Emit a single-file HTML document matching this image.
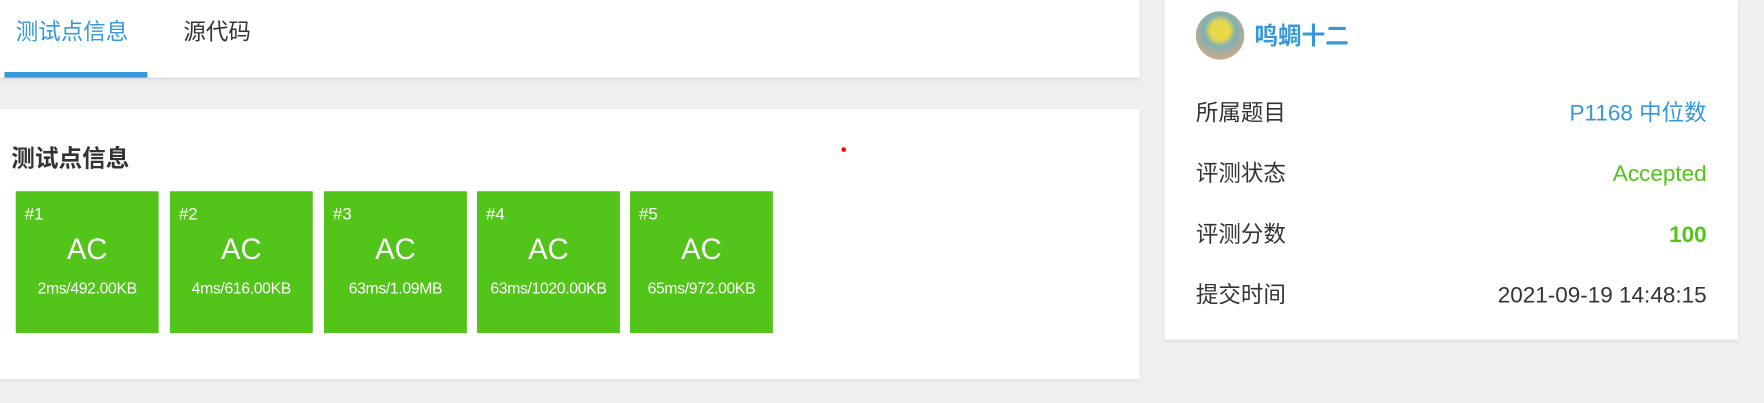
<!DOCTYPE html>
<html><head><meta charset="utf-8"><style>
body{margin:0;width:1764px;height:402px;background:#efefef;font-family:"Liberation Sans","Noto Sans CJK SC",sans-serif;position:relative;overflow:hidden}
#w{position:absolute;left:0;top:0;width:1568px;height:358px;transform:scale(1.125);transform-origin:0 0}
.card{position:absolute;background:#fff;box-shadow:0 1px 3px rgba(0,0,0,.12)}
.tab{position:absolute;top:16px;font-size:20px;line-height:26px}
.box{position:absolute;top:170px;width:127px;height:126px;background:#52c41a;color:#fff;text-align:center}
.box .n{position:absolute;left:8px;top:12px;font-size:15px}
.box .ac{position:absolute;left:0;right:0;top:36px;font-size:26px}
.box .m{position:absolute;left:-3px;right:-3px;top:78px;font-size:14px;white-space:nowrap;letter-spacing:-0.3px}
.row{position:absolute;left:1063px;width:454px;font-size:20px;color:#333;line-height:28px}
.row span{position:absolute;right:0;top:0;line-height:28px}
</style></head><body><div id="w">
<div class="card" style="left:0;top:0;width:1013px;height:69px">
<div class="tab" style="left:14px;color:#3498db">测试点信息</div>
<div class="tab" style="left:163px;color:#333">源代码</div>
<div style="position:absolute;left:4px;top:64px;width:127px;height:5px;background:#3498db"></div>
</div>
<div class="card" style="left:0;top:97px;width:1013px;height:240px">
<div style="position:absolute;left:10px;top:28px;font-size:21px;font-weight:bold;color:#333">测试点信息</div>
</div>
<div style="position:absolute;left:748px;top:131px;width:4px;height:4px;border-radius:2px;background:#e00"></div>
<div class="box" style="left:14px"><div class="n">#1</div><div class="ac">AC</div><div class="m">2ms/492.00KB</div></div>
<div class="box" style="left:151px"><div class="n">#2</div><div class="ac">AC</div><div class="m">4ms/616.00KB</div></div>
<div class="box" style="left:288px"><div class="n">#3</div><div class="ac">AC</div><div class="m">63ms/1.09MB</div></div>
<div class="box" style="left:424px"><div class="n">#4</div><div class="ac">AC</div><div class="m">63ms/1020.00KB</div></div>
<div class="box" style="left:560px"><div class="n">#5</div><div class="ac">AC</div><div class="m">65ms/972.00KB</div></div>
<div class="card" style="left:1035px;top:0;width:510px;height:302px"></div>
<div style="position:absolute;left:1063px;top:10px;width:43px;height:43px;border-radius:50%;background:radial-gradient(circle at 50% 40%,#e8d84a 0 25%,#7fb0b4 42%,#c9a98a 75%)"></div>
<div style="position:absolute;left:1115px;top:19px;font-size:21px;font-weight:bold;color:#3498db;line-height:28px">鸣蜩十二</div>
<div class="row" style="top:87px">所属题目<span style="color:#3498db">P1168 中位数</span></div>
<div class="row" style="top:141px">评测状态<span style="color:#52c41a">Accepted</span></div>
<div class="row" style="top:195px">评测分数<span style="color:#52c41a;font-weight:bold">100</span></div>
<div class="row" style="top:249px">提交时间<span>2021-09-19 14:48:15</span></div>
</div></body></html>
